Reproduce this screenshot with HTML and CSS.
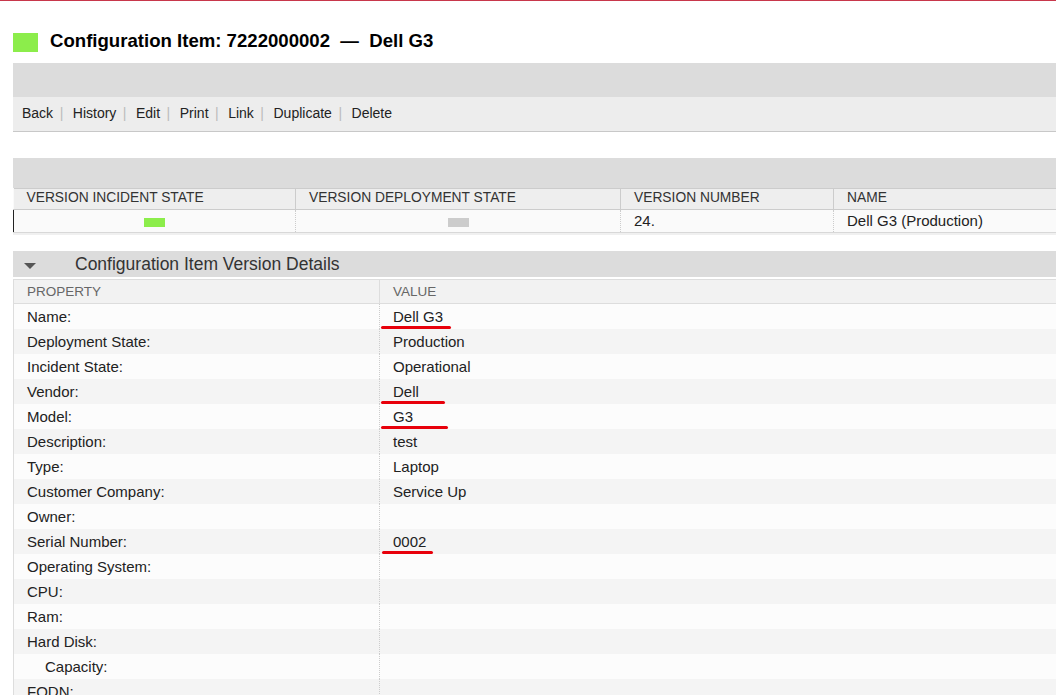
FILE: index.html
```html
<!DOCTYPE html>
<html lang="en">
<head>
    <meta charset="UTF-8">
    <meta name="viewport" content="width=device-width, initial-scale=1.0">
    <title>Configuration Item: 7222000002 - Dell G3</title>
    <link rel="stylesheet" href="styles.css">
</head>
<body>
    <div class="topline"></div>
    <div class="page">
        <h1 class="title">
            <span class="state-box"></span>
            <span class="title-text">Configuration Item: 7222000002 &nbsp;&mdash;&nbsp; Dell G3</span>
        </h1>

        <div class="bar"></div>
        <div class="menu">
            <a href="#">Back</a><span class="sep">|</span>
            <a href="#">History</a><span class="sep">|</span>
            <a href="#">Edit</a><span class="sep">|</span>
            <a href="#">Print</a><span class="sep">|</span>
            <a href="#">Link</a><span class="sep">|</span>
            <a href="#">Duplicate</a><span class="sep">|</span>
            <a href="#">Delete</a>
        </div>

        <div class="versions">
            <div class="versions-bar"></div>
            <table class="versions-table">
                <colgroup>
                    <col style="width: 282px">
                    <col style="width: 325px">
                    <col style="width: 213px">
                    <col>
                </colgroup>
                <thead>
                    <tr>
                        <th>Version Incident State</th>
                        <th>Version Deployment State</th>
                        <th>Version Number</th>
                        <th>Name</th>
                    </tr>
                </thead>
                <tbody>
                    <tr class="selected">
                        <td class="center"><span class="chip chip-green"></span></td>
                        <td class="center"><span class="chip chip-gray"></span></td>
                        <td>24.</td>
                        <td>Dell G3 (Production)</td>
                    </tr>
                </tbody>
            </table>
        </div>

        <div class="details">
            <div class="details-head">
                <span class="caret"></span>
                <span class="details-title">Configuration Item Version Details</span>
            </div>
            <table class="props">
                <colgroup>
                    <col style="width: 366px">
                    <col>
                </colgroup>
                <thead>
                    <tr>
                        <th>Property</th>
                        <th>Value</th>
                    </tr>
                </thead>
                <tbody>
                    <tr><td>Name:</td><td><span class="mark mark-name">Dell G3</span></td></tr>
                    <tr><td>Deployment State:</td><td>Production</td></tr>
                    <tr><td>Incident State:</td><td>Operational</td></tr>
                    <tr><td>Vendor:</td><td><span class="mark mark-vendor">Dell</span></td></tr>
                    <tr><td>Model:</td><td><span class="mark mark-model">G3</span></td></tr>
                    <tr><td>Description:</td><td>test</td></tr>
                    <tr><td>Type:</td><td>Laptop</td></tr>
                    <tr><td>Customer Company:</td><td>Service Up</td></tr>
                    <tr><td>Owner:</td><td></td></tr>
                    <tr><td>Serial Number:</td><td><span class="mark mark-serial">0002</span></td></tr>
                    <tr><td>Operating System:</td><td></td></tr>
                    <tr><td>CPU:</td><td></td></tr>
                    <tr><td>Ram:</td><td></td></tr>
                    <tr><td>Hard Disk:</td><td></td></tr>
                    <tr><td class="sub">Capacity:</td><td></td></tr>
                    <tr><td>FQDN:</td><td></td></tr>
                    <tr><td>Network Adapter:</td><td></td></tr>
                </tbody>
            </table>
        </div>
    </div>
</body>
</html>
```

FILE: styles.css
```css
html, body {
    overflow: hidden;
}
body {
    margin: 0;
    font-family: "Liberation Sans", Arial, sans-serif;
    font-size: 14px;
    color: #222;
    background-color: white;
}
.topline {
    height: 1px;
    background-color: #c8374b;
}
.page {
    padding-left: 13px;
}
.title {
    display: flex;
    align-items: center;
    gap: 12px;
    height: 19px;
    margin: 32px 0 11px 0;
    font-size: 18.6px;
    font-weight: bold;
    color: #000;
}
.title-text {
    margin-bottom: 3px;
}
.state-box {
    width: 25px;
    height: 19px;
    background-color: #8ced4b;
}
.bar {
    height: 34px;
    background-color: #dcdcdc;
}
.menu {
    height: 32px;
    display: flex;
    align-items: center;
    padding: 0 0 2px 9px;
    background-color: #ededed;
    border-bottom: 1px solid #c8c8c8;
}
.menu a {
    color: #222;
    text-decoration: none;
}
.sep {
    color: #bbb;
    margin: 0 9.5px 0 6.5px;
}
.versions {
    margin-top: 26px;
    padding-bottom: 2px;
    background-color: #f0f0f0;
}
.versions-bar {
    height: 30px;
    background-color: #dcdcdc;
}
.versions-table {
    width: 100%;
    table-layout: fixed;
    border-collapse: collapse;
    background-color: #fafafa;
}
.versions-table th {
    height: 17px;
    padding: 0 13px 3px 13px;
    text-align: left;
    font-size: 13.8px;
    font-weight: normal;
    text-transform: uppercase;
    color: #333;
    background-color: #eeeeee;
    border-top: 1px solid #cccccc;
    border-bottom: 1px solid #cccccc;
    border-left: 1px solid #cccccc;
}
.versions-table th:first-child {
    border-left: none;
}
.versions-table td {
    height: 21px;
    padding: 0 13px 1px 13px;
    font-size: 15px;
    line-height: 17px;
    color: #222;
    border-left: 1px dotted #cccccc;
    border-bottom: 1px solid #d8d8d8;
    white-space: nowrap;
}
.versions-table tr.selected td:first-child {
    border-left: 1px solid #222;
}
.center {
    text-align: center;
}
.chip {
    display: inline-block;
    width: 21px;
    height: 9px;
    vertical-align: middle;
}
.chip-green {
    background-color: #8ced4b;
}
.chip-gray {
    background-color: #cccccc;
}
.details {
    margin-top: 16px;
}
.details-head {
    height: 26px;
    display: flex;
    align-items: center;
    background-color: #dcdcdc;
}
.caret {
    width: 0;
    height: 0;
    margin: 4px 0 0 11px;
    border-left: 6px solid transparent;
    border-right: 6px solid transparent;
    border-top: 6px solid #555;
}
.details-title {
    margin-left: 39px;
    font-size: 17.5px;
    color: #333;
}
.props {
    width: 100%;
    margin-top: 2px;
    table-layout: fixed;
    border-collapse: collapse;
    border-left: 1px solid #dddddd;
}
.props th {
    height: 23px;
    padding: 0 13px;
    text-align: left;
    font-size: 13.5px;
    font-weight: normal;
    text-transform: uppercase;
    color: #666;
    background-color: #f2f2f2;
    border-top: 1px solid #dddddd;
    border-bottom: 1px solid #dddddd;
}
.props th + th {
    border-left: 1px solid #dddddd;
}
.props td {
    height: 25px;
    padding: 0 13px;
    font-size: 15px;
    white-space: nowrap;
}
.props td + td {
    border-left: 1px dotted #cccccc;
}
.props tbody tr:nth-child(odd) {
    background-color: #fcfcfc;
}
.props tbody tr:nth-child(even) {
    background-color: #f4f4f4;
}
.props td.sub {
    padding-left: 31px;
}
.mark {
    position: relative;
}
.mark::after {
    content: "";
    position: absolute;
    left: -12px;
    bottom: -4px;
    height: 3px;
    border-radius: 2px;
    background-color: #e8000b;
}
.mark-name::after {
    width: 70px;
}
.mark-vendor::after {
    width: 64px;
}
.mark-model::after {
    width: 67px;
}
.mark-serial::after {
    width: 51px;
    left: -11px;
}
```
